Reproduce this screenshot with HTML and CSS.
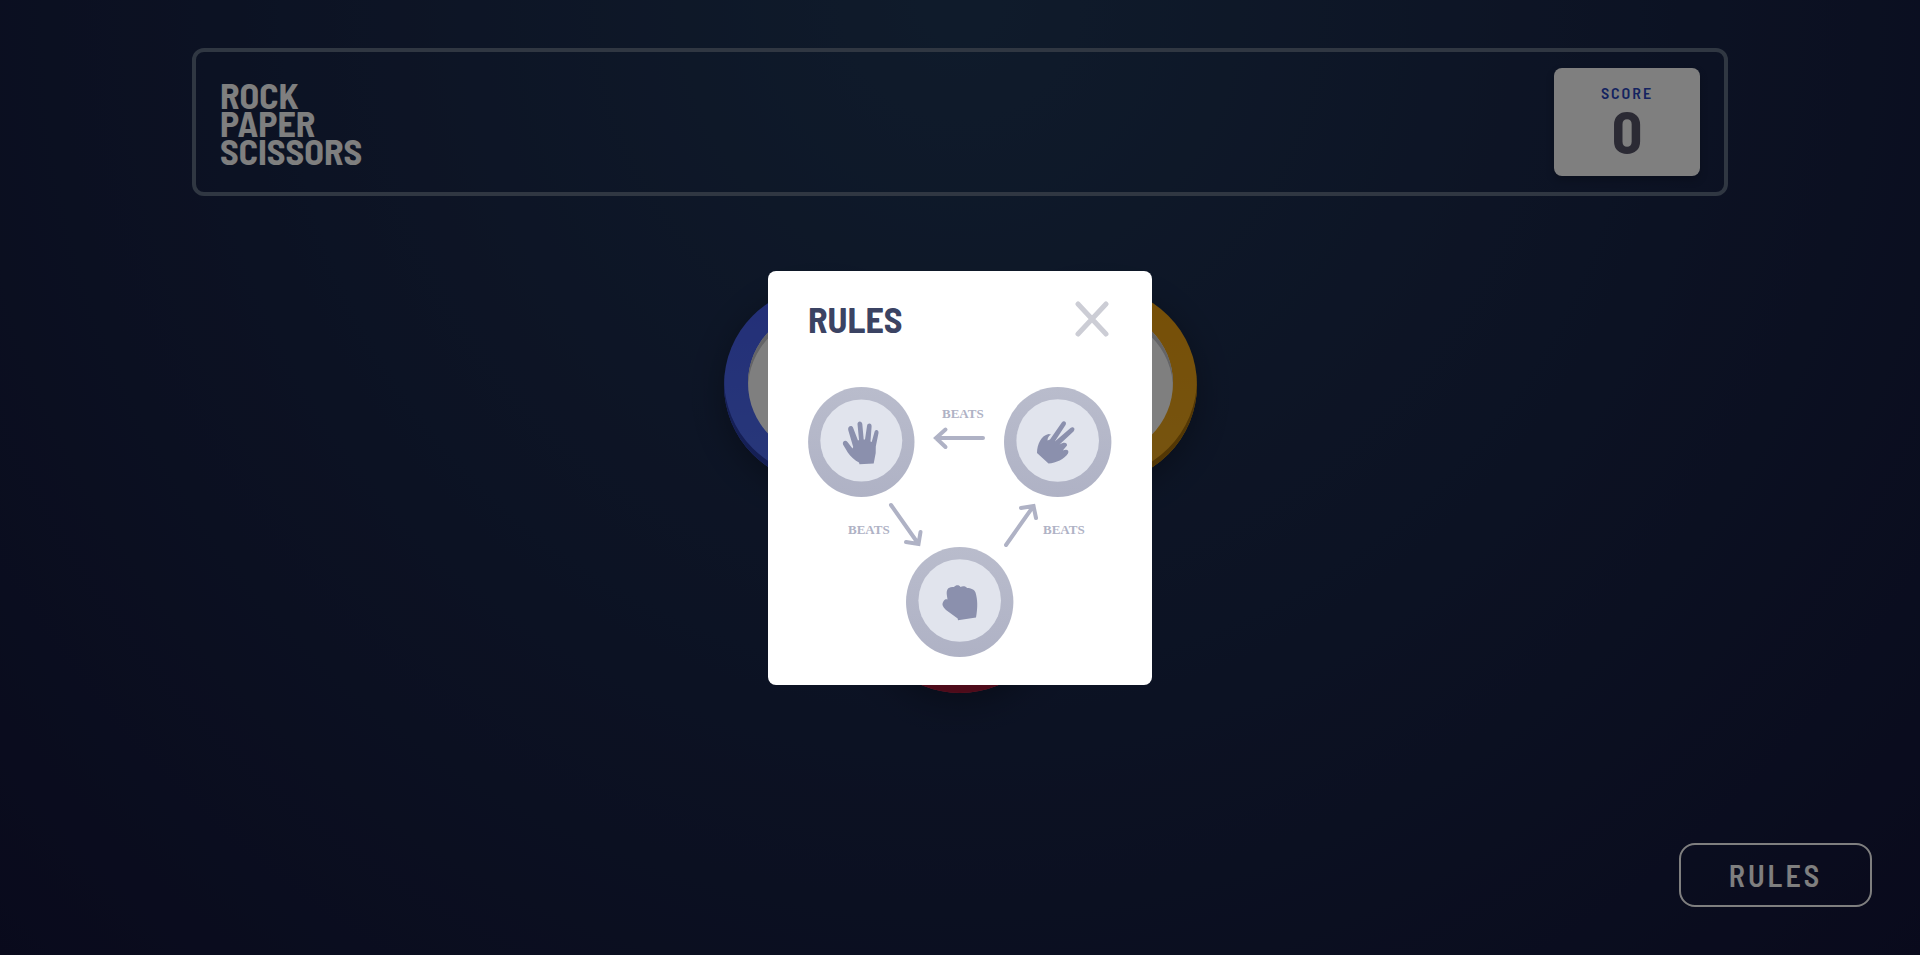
FILE: index.html
```html
<!DOCTYPE html>
<html lang="en">
<head>
<meta charset="utf-8">
<title>Rock Paper Scissors</title>
<link rel="stylesheet" href="styles.css">
</head>
<body>
<div class="page">
  <header class="header">
    <h1 class="logo">Rock<br>Paper<br>Scissors</h1>
    <div class="score">
      <span class="score-label">Score</span>
      <span class="score-value">0</span>
    </div>
  </header>
  <main class="board">
    <div class="board-row">
      <button class="pick pick-paper" type="button" aria-label="Paper"><span class="pick-face"></span></button>
      <button class="pick pick-scissors" type="button" aria-label="Scissors"><span class="pick-face"></span></button>
    </div>
    <button class="pick pick-rock" type="button" aria-label="Rock"><span class="pick-face"></span></button>
  </main>
  <footer class="footer">
    <button class="rules-button" type="button">RULES</button>
  </footer>
</div>
<div class="overlay">
  <section class="modal" role="dialog" aria-modal="true" aria-labelledby="rules-title">
    <div class="modal-head">
      <h2 class="modal-title" id="rules-title">RULES</h2>
      <button class="close" type="button" aria-label="Close">
        <svg width="34" height="36" viewBox="0 0 34 36"><path d="M3 3l28 30M31 3L3 33" fill="none" stroke="#cccdd5" stroke-width="5" stroke-linecap="round"/></svg>
      </button>
    </div>
    <svg class="diagram" viewBox="0 0 304 270" role="img" aria-label="Paper beats rock, rock beats scissors, scissors beats paper">
      <defs>
        <linearGradient id="ring" x1="0" y1="0" x2="0" y2="1"><stop offset="0" stop-color="#b9bccc"/><stop offset="1" stop-color="#afb2c5"/></linearGradient>
      </defs>
      <g fill="url(#ring)">
        <ellipse cx="53.300" cy="55" rx="53.200" ry="55"/>
        <ellipse cx="249.700" cy="55" rx="53.700" ry="55"/>
        <ellipse cx="151.700" cy="215" rx="53.700" ry="55"/>
      </g>
      <g fill="#e1e4ed">
        <circle cx="53.300" cy="53.500" r="41"/>
        <circle cx="249.700" cy="53.500" r="41.300"/>
        <circle cx="151.700" cy="213.500" r="41.300"/>
      </g>
      <g fill="#8b90ad">
        <path d="M51.500 77.300L51 75.500C47 73.500 42.500 69.500 39.800 65.500L35 57.500C34 54.500 37.500 52.500 39.500 55L44.500 61.500L45.200 60L40.200 43C39.500 39 44 37.500 45.200 41L50 53.500L51 53L49.500 37C49.500 33.500 54 33.500 54.300 37L55.700 52.500L57 52.500L59 39C59.500 35.500 64 36 63.600 39.500L62.500 54.500L63.700 55L66.500 45C67.500 41.500 71 43 70.500 46L67.800 59.500L67.700 66L65.700 76.500Z"/>
        <path d="M229 66C229 57 233.500 48.500 240.500 47L243 47.500C240.500 49 239.500 51 239.500 53.500L242 52.500L253.800 35.500C255.800 33 259 35 257.700 37.800L246.800 54.500L262.500 41C265.500 39 267.800 42.200 265.500 44.400L251.500 57.500C256 54.500 259.500 55.500 259 58.500L254.800 63.500C259 61.500 261.500 63.500 260 66.500C256.500 72 248 76 240.500 76.500Z"/>
        <path d="M150 233.300L149.700 231.500L138 223C134 218.500 133.500 217.500 136 213.500C137 212 138.500 212 139.500 212.500L138.700 207C138.500 201 141 200 146 200C148 197.500 151.500 198 152.500 200C154.500 198.500 158 199 159 201C163 201 166.500 202.500 167.500 205.500C169.500 212 170 220 168 230.500Z"/>
      </g>
      <g fill="none" stroke="#afb2c5" stroke-width="4" stroke-linecap="round">
        <path d="M175 51H128M137.500 42.500L128 51L137.500 60"/>
        <path d="M83 118L110.500 157M98 155L110.500 157L112.500 145"/>
        <path d="M198 158L225.500 119M213 121L225.500 119L228 131"/>
      </g>
      <g class="beats">
        <text x="134" y="31">BEATS</text>
        <text x="40" y="147">BEATS</text>
        <text x="235" y="147">BEATS</text>
      </g>
    </svg>
  </section>
</div>
</body>
</html>
```

FILE: styles.css
```css
* { box-sizing: border-box; }
html, body { height: 100%; margin: 0; }
body {
  font-family: "Barlow Semi Condensed", "Liberation Sans Narrow", Roboto, sans-serif;
  font-weight: 700;
  background: #131539;
}
.page {
  min-height: 100%;
  display: flex;
  flex-direction: column;
  align-items: center;
  padding: 48px;
  background: radial-gradient(circle at top, #1f3757, #131539);
}
.header {
  width: 80vw;
  display: flex;
  justify-content: space-between;
  align-items: center;
  padding: 16px 24px;
  border: 4px solid #606e85;
  border-radius: 12px;
}
.logo {
  margin: 0;
  padding-top: 2px;
  color: #fff;
  font-size: 36px;
  line-height: 28px;
  text-transform: uppercase;
}
.score {
  width: 146px;
  height: 108px;
  display: flex;
  flex-direction: column;
  align-items: center;
  justify-content: center;
  padding-bottom: 4px;
  background: #fff;
  border-radius: 8px;
  box-shadow: 0 4px 8px rgba(0, 0, 0, 0.2);
}
.score-label {
  color: #2a46c0;
  font-size: 16px;
  font-weight: 600;
  line-height: 20px;
  letter-spacing: 2px;
  text-transform: uppercase;
}
.score-value {
  color: #565468;
  font-size: 60px;
  line-height: 54px;
}
.board {
  display: flex;
  flex-direction: column;
  align-items: center;
  gap: 14px;
  padding-top: 91px;
}
.board-row { display: flex; gap: 81px; }
.pick {
  width: 196px;
  height: 196px;
  display: flex;
  padding: 22px 24px;
  border: 0;
  border-radius: 50%;
}
.pick-face {
  width: 148px;
  height: 148px;
  border-radius: 50%;
  background: #fff;
  box-shadow: inset 0 6px #c8c8cc;
}
.pick-paper {
  background: linear-gradient(#465ef0, #5070f4);
  box-shadow: inset 0 -6px #2a3eaa, 0 8px 32px rgba(0, 0, 0, 0.3);
}
.pick-scissors {
  background: linear-gradient(#ec9e0e, #eca922);
  box-shadow: inset 0 -6px #a66e08, 0 8px 32px rgba(0, 0, 0, 0.3);
}
.pick-rock {
  background: linear-gradient(#dc2e4e, #dd405d);
  box-shadow: inset 0 -8px #9d1634, 0 8px 32px rgba(0, 0, 0, 0.3);
}
.footer { align-self: flex-end; margin-top: auto; }
.rules-button {
  width: 193px;
  height: 64px;
  border: 2px solid #fff;
  border-radius: 16px;
  background: none;
  color: #fff;
  font: inherit;
  font-size: 30px;
  font-weight: 600;
  letter-spacing: 3px;
}
.overlay {
  position: fixed;
  inset: 0;
  display: flex;
  align-items: center;
  justify-content: center;
  background: rgba(0, 0, 0, 0.5);
}
.modal {
  width: 384px;
  padding: 30px 40px 28px;
  background: #fff;
  border-radius: 8px;
}
.modal-head {
  display: flex;
  justify-content: space-between;
  align-items: center;
  margin-bottom: 50px;
  padding-right: 3px;
}
.modal-title { margin: 0; color: #3b4363; font-size: 36px; line-height: 36px; }
.close { display: flex; padding: 0; border: 0; background: none; }
.diagram { display: block; width: 100%; }
.beats { fill: #afb2c5; font-family: "Liberation Serif", serif; font-size: 13px; font-weight: 700; }
```
